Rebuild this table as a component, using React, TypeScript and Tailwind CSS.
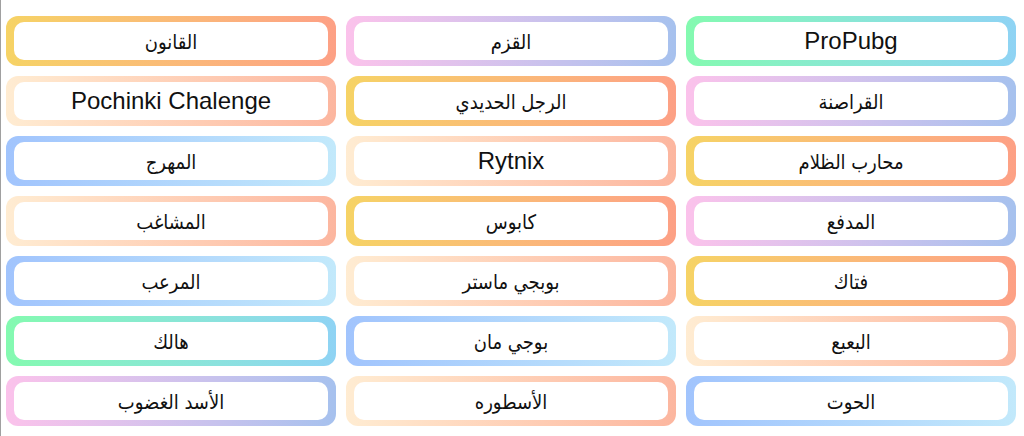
import React from 'react';

const yellow = 'bg-gradient-to-r from-[#f6d365] to-[#fda085]';
const pink = 'bg-gradient-to-r from-[#fbc2eb] to-[#a6c1ee]';
const green = 'bg-gradient-to-r from-[#84fab0] to-[#8fd3f4]';
const peach = 'bg-gradient-to-r from-[#ffecd2] to-[#fcb69f]';
const blue = 'bg-gradient-to-r from-[#a1c4fd] to-[#c2e9fb]';

// listed in reading order (right to left)
const teams = [
  { name: 'ProPubg', bg: green },
  { name: 'القزم', bg: pink },
  { name: 'القانون', bg: yellow },
  { name: 'القراصنة', bg: pink },
  { name: 'الرجل الحديدي', bg: yellow },
  { name: 'Pochinki Chalenge', bg: peach },
  { name: 'محارب الظلام', bg: yellow },
  { name: 'Rytnix', bg: peach },
  { name: 'المهرج', bg: blue },
  { name: 'المدفع', bg: pink },
  { name: 'كابوس', bg: yellow },
  { name: 'المشاغب', bg: peach },
  { name: 'فتاك', bg: yellow },
  { name: 'بوبجي ماستر', bg: peach },
  { name: 'المرعب', bg: blue },
  { name: 'البعبع', bg: peach },
  { name: 'بوجي مان', bg: blue },
  { name: 'هالك', bg: green },
  { name: 'الحوت', bg: blue },
  { name: 'الأسطوره', bg: peach },
  { name: 'الأسد الغضوب', bg: pink },
];

const isArabic = (s: string) => /[\u0600-\u06FF]/.test(s);

const App: React.FC = () => {
  return (
    <div className="min-h-[436px] bg-white border-l border-[#a0a0a0] pt-4 pl-[5px] pr-2 font-['Liberation_Sans','DejaVu_Sans_Condensed','DejaVu_Sans',sans-serif]">
      <div dir="rtl" className="grid grid-cols-3 gap-[10px]">
        {teams.map((team, index) => (
          <div key={index} className={`${team.bg} rounded-xl px-2 py-[6px] h-[50px]`}>
            <div
              className={`h-full bg-white rounded-[10px] flex items-center justify-center leading-none text-[#111] ${
                isArabic(team.name) ? 'text-[20px] pt-[1px]' : 'text-[24px]'
              }`}
            >
              {team.name}
            </div>
          </div>
        ))}
      </div>
    </div>
  );
};

export default App;
